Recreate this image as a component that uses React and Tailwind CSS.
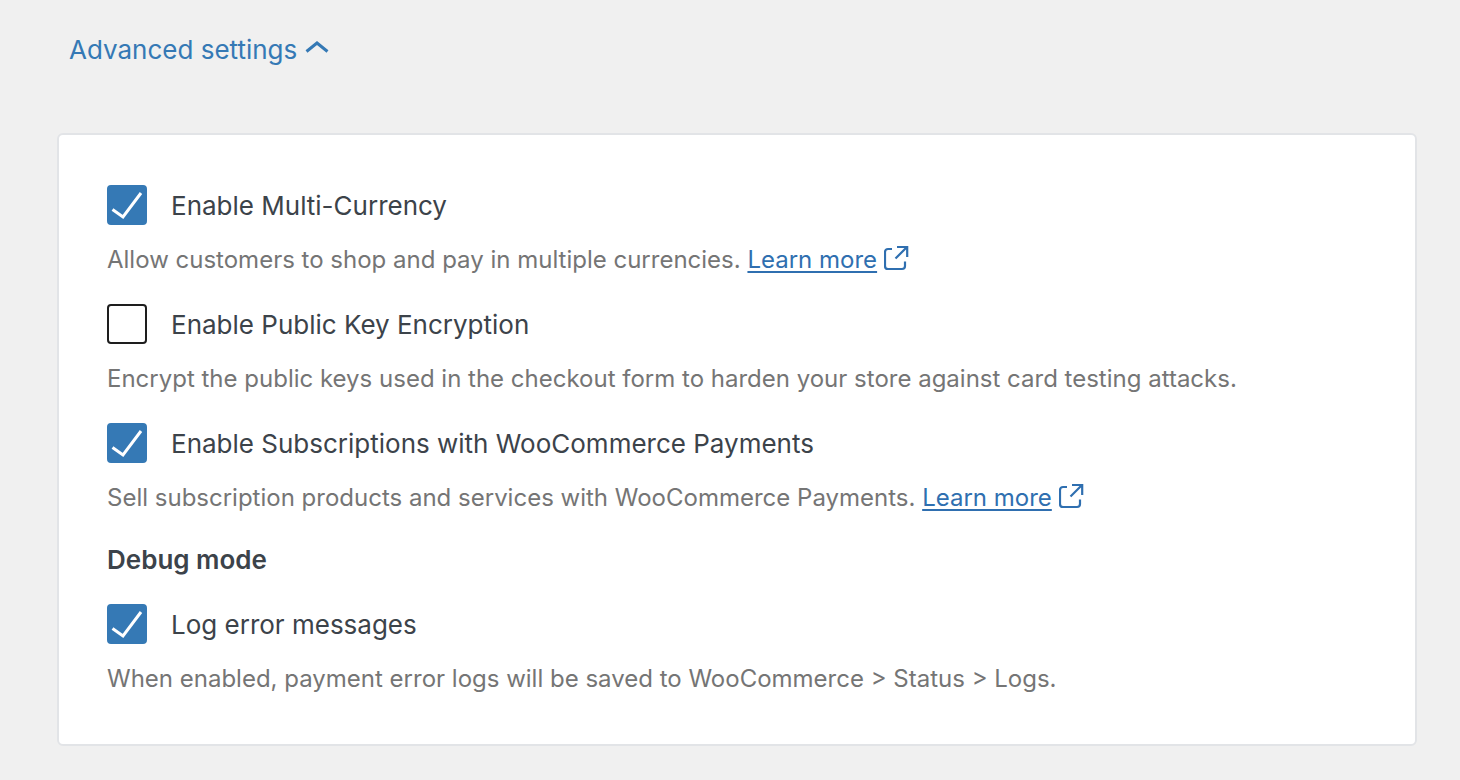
import React, { useState } from 'react';

const SETTINGS = [
  {
    id: 'multi-currency',
    label: 'Enable Multi-Currency',
    help: 'Allow customers to shop and pay in multiple currencies.',
    link: true,
    checked: true
  },
  {
    id: 'public-key-encryption',
    label: 'Enable Public Key Encryption',
    help: 'Encrypt the public keys used in the checkout form to harden your store against card testing attacks.',
    link: false,
    checked: false
  },
  {
    id: 'subscriptions',
    label: 'Enable Subscriptions with WooCommerce Payments',
    help: 'Sell subscription products and services with WooCommerce Payments.',
    link: true,
    checked: true
  }
];

const DEBUG_SETTING = {
  id: 'log-errors',
  label: 'Log error messages',
  help: 'When enabled, payment error logs will be saved to WooCommerce > Status > Logs.',
  link: false,
  checked: true
};

const ChevronUp = () => (
  <svg className="h-5 w-6" viewBox="0 0 24 20" fill="none" stroke="currentColor" strokeWidth="3" aria-hidden="true">
    <path d="M1.5 11.5 12 3l10.5 8.5" />
  </svg>
);

const ExternalIcon = () => (
  <svg className="inline-block h-7 w-7 align-[-5px]" viewBox="0 0 28 28" fill="none" stroke="currentColor" strokeWidth="2.2" aria-hidden="true">
    <path d="M8 4H4a3 3 0 0 0-3 3v14a3 3 0 0 0 3 3h14a3 3 0 0 0 3-3v-4.5" />
    <path d="M11.5 13.5 22.5 2.5M13 2H23.2v10" />
  </svg>
);

const Setting = ({ id, label, help, link, checked }) => {
  const [on, setOn] = useState(checked);

  return (
    <div>
      <div className="flex items-center gap-6">
        <div className="relative h-10 w-10 shrink-0">
          <input
            id={id}
            type="checkbox"
            checked={on}
            onChange={(e) => setOn(e.target.checked)}
            aria-describedby={`${id}-help`}
            className="block h-10 w-10 appearance-none rounded-sm border-2 border-[#1e1e1e] bg-white checked:border-[#3579b5] checked:bg-[#3579b5]"
          />
          {on && (
            <svg className="pointer-events-none absolute inset-0 h-10 w-10" viewBox="0 0 40 40" fill="none" stroke="#fff" strokeWidth="3" aria-hidden="true">
              <path d="M5.5 24.5 16 32 34 8" />
            </svg>
          )}
        </div>
        <label htmlFor={id} className="pt-0.5 text-[26px] leading-[38px] text-[#3c434a]">{label}</label>
      </div>
      <p id={`${id}-help`} className="mt-5 text-[24px] leading-[30px] text-[#757575]">
        {help}
        {link && (
          <>
            {' '}
            <a href="#" className="text-[#2f6fb0]">
              <span className="underline decoration-2 underline-offset-[3px]">Learn more</span>{' '}
              <ExternalIcon />
            </a>
          </>
        )}
      </p>
    </div>
  );
};

const App = () => {
  const [open, setOpen] = useState(true);

  return (
    <main className="min-h-screen bg-[#f0f0f0] pt-[30px] pr-[43px] pb-[34px] pl-[57px] font-['Inter',sans-serif]">
      <button
        type="button"
        aria-expanded={open}
        onClick={() => setOpen(!open)}
        className="ml-3 flex items-center gap-2 text-[26px] leading-10 text-[#3579b5]"
      >
        Advanced settings
        <ChevronUp />
      </button>

      {open && (
        <section className="mt-[63px] rounded-md border-2 border-[#e2e4e7] bg-white px-12 py-[50px]">
          <div className="flex flex-col gap-[29px]">
            {SETTINGS.map((setting) => (
              <Setting key={setting.id} {...setting} />
            ))}
          </div>
          <h4 className="mt-8 mb-[29px] text-[26px] leading-[30px] font-semibold text-[#3c434a]">Debug mode</h4>
          <Setting {...DEBUG_SETTING} />
        </section>
      )}
    </main>
  );
};

export default App;
